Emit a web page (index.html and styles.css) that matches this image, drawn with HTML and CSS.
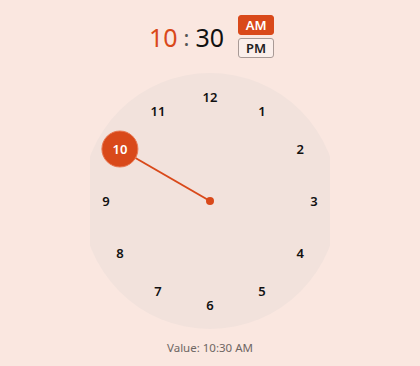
FILE: index.html
```html
<!DOCTYPE html>
<html>
  <head>
    <meta charset="utf-8">
    <title>Time Picker</title>
    <link rel="stylesheet" href="styles.css">
  </head>
  <body>
    <div class="header">
      <div class="time">
        <span class="hour">10</span>
        <span class="colon">:</span>
        <span class="minute">30</span>
      </div>
      <div class="ampm">
        <button class="period selected">AM</button>
        <button class="period">PM</button>
      </div>
    </div>
    <div class="clock">
      <svg class="face" width="240" height="256" viewBox="8 0 240 256">
        <circle cx="128" cy="128" r="128" class="dial"></circle>
        <line x1="128" y1="128" x2="37.9" y2="76" class="hand"></line>
        <circle cx="128" cy="128" r="4" class="pivot"></circle>
        <circle cx="37.9" cy="76" r="18" class="knob"></circle>
        <text x="128" y="24" class="num">12</text>
        <text x="180" y="37.9" class="num">1</text>
        <text x="218.1" y="76" class="num">2</text>
        <text x="232" y="128" class="num">3</text>
        <text x="218.1" y="180" class="num">4</text>
        <text x="180" y="218.1" class="num">5</text>
        <text x="128" y="232" class="num">6</text>
        <text x="76" y="218.1" class="num">7</text>
        <text x="37.9" y="180" class="num">8</text>
        <text x="24" y="128" class="num">9</text>
        <text x="37.9" y="76" class="num active">10</text>
        <text x="76" y="37.9" class="num">11</text>
      </svg>
    </div>
    <p class="value">Value: 10:30 AM</p>
  </body>
</html>
```

FILE: styles.css
```css
html {
  font-family: "Noto Sans", "Open Sans", sans-serif;
}
body {
  margin: 0;
  background-color: #fae7e0;
  width: 420px;
  height: 366px;
  overflow: hidden;
}
.header {
  display: flex;
  justify-content: center;
  align-items: center;
  gap: 14px;
  padding-top: 15px;
  margin-left: 3px;
}
.time {
  display: flex;
  align-items: center;
  gap: 6px;
  font-size: 25px;
  line-height: 30px;
  color: #111;
}
.hour {
  color: #d9491a;
}
.colon {
  color: #555;
  font-size: 22px;
}
.ampm {
  display: flex;
  flex-direction: column;
  gap: 3px;
}
.period {
  font-family: "Noto Sans", "Open Sans", sans-serif;
  font-size: 13px;
  font-weight: 600;
  width: 36px;
  height: 20px;
  padding: 0;
  border: 1px solid #a89a96;
  border-radius: 3px;
  background-color: #fbefeb;
  color: #222;
}
.period.selected {
  background-color: #d9491a;
  border-color: #d9491a;
  color: #fff;
}
.clock {
  display: flex;
  justify-content: center;
  margin-top: 15px;
}
.face {
  display: block;
}
.dial {
  fill: #f2e2dc;
}
.hand {
  stroke: #d9491a;
  stroke-width: 2;
}
.pivot {
  fill: #d9491a;
}
.knob {
  fill: #d9491a;
  stroke: #e97a55;
  stroke-width: 1;
}
.num {
  font-size: 13px;
  font-weight: 600;
  fill: #111;
  text-anchor: middle;
  dominant-baseline: central;
}
.num.active {
  fill: #fff;
}
.value {
  margin: 11px 0 0 0;
  text-align: center;
  font-size: 11.5px;
  color: #6e6663;
}
```
